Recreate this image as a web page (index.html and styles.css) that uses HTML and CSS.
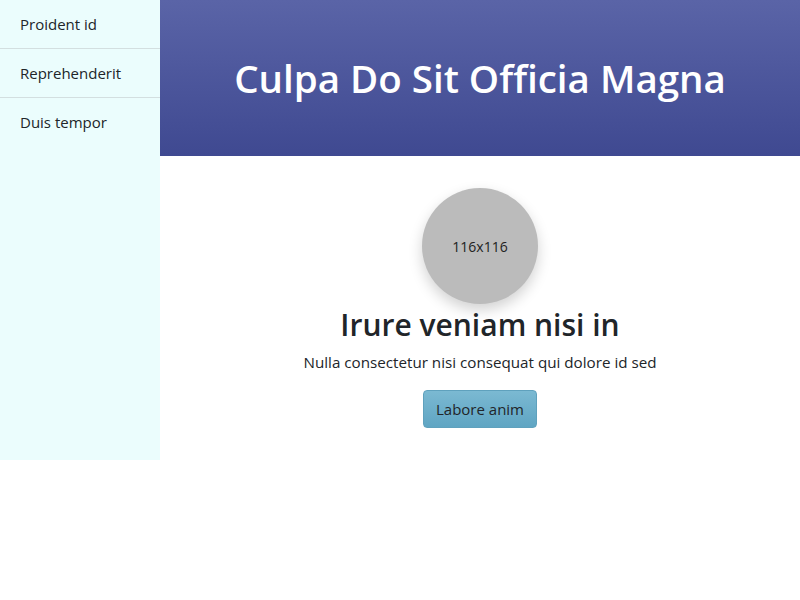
FILE: index.html
```html
<!DOCTYPE html>
<html>
<head>
<meta charset="utf-8">
<link rel="stylesheet" href="styles.css">
</head>
<body>
<div class="layout">
  <nav class="sidebar">
    <a class="nav-item">Proident id</a>
    <a class="nav-item">Reprehenderit</a>
    <a class="nav-item last">Duis tempor</a>
  </nav>
  <main class="main">
    <header class="hero">
      <h1 class="hero-title">Culpa Do Sit Officia Magna</h1>
    </header>
    <section class="profile">
      <div class="avatar">116x116</div>
      <h2 class="profile-name">Irure veniam nisi in</h2>
      <p class="profile-text">Nulla consectetur nisi consequat qui dolore id sed</p>
      <button class="btn">Labore anim</button>
    </section>
  </main>
</div>
</body>
</html>
```
FILE: styles.css
```css
* { box-sizing: border-box; }
body {
  margin: 0;
  font-family: "Open Sans", "Noto Sans", sans-serif;
  color: #212529;
  background: #fff;
}
.layout {
  display: flex;
  align-items: stretch;
}
.sidebar {
  width: 160px;
  flex: none;
  background: #ebfdfd;
  display: flex;
  flex-direction: column;
}
.nav-item {
  display: block;
  height: 49px;
  padding: 14px 20px 0;
  font-size: 15px;
  color: #212529;
  border-bottom: 1px solid #d3dfe0;
}
.nav-item.last { border-bottom: none; }
.main {
  flex: 1;
  display: flex;
  flex-direction: column;
}
.hero {
  height: 156px;
  background: linear-gradient(to bottom, #5a64a7, #3f4991);
  display: flex;
  align-items: center;
  justify-content: center;
}
.hero-title {
  margin: 0;
  color: #fff;
  font-size: 38.5px;
  font-weight: 600;
}
.profile {
  display: flex;
  flex-direction: column;
  align-items: center;
  padding: 32px 0 32px;
}
.avatar {
  width: 116px;
  height: 116px;
  border-radius: 50%;
  background: #bbbbbb;
  box-shadow: 0 6px 14px rgba(0,0,0,0.18);
  display: flex;
  align-items: center;
  justify-content: center;
  font-size: 14px;
  color: #222;
}
.profile-name {
  margin: 3px 0 0;
  font-size: 30px;
  font-weight: 600;
  line-height: 1.2;
}
.profile-text {
  margin: 8px 0 0;
  font-size: 15.2px;
  line-height: 1.5;
}
.btn {
  margin-top: 16px;
  height: 38px;
  width: 114px;
  padding: 0;
  font-family: inherit;
  font-size: 15px;
  color: #212529;
  border: 1px solid #5fa1bd;
  border-radius: 4px;
  background: linear-gradient(to bottom, #7bb9d2, #5fa5c3);
}
```
